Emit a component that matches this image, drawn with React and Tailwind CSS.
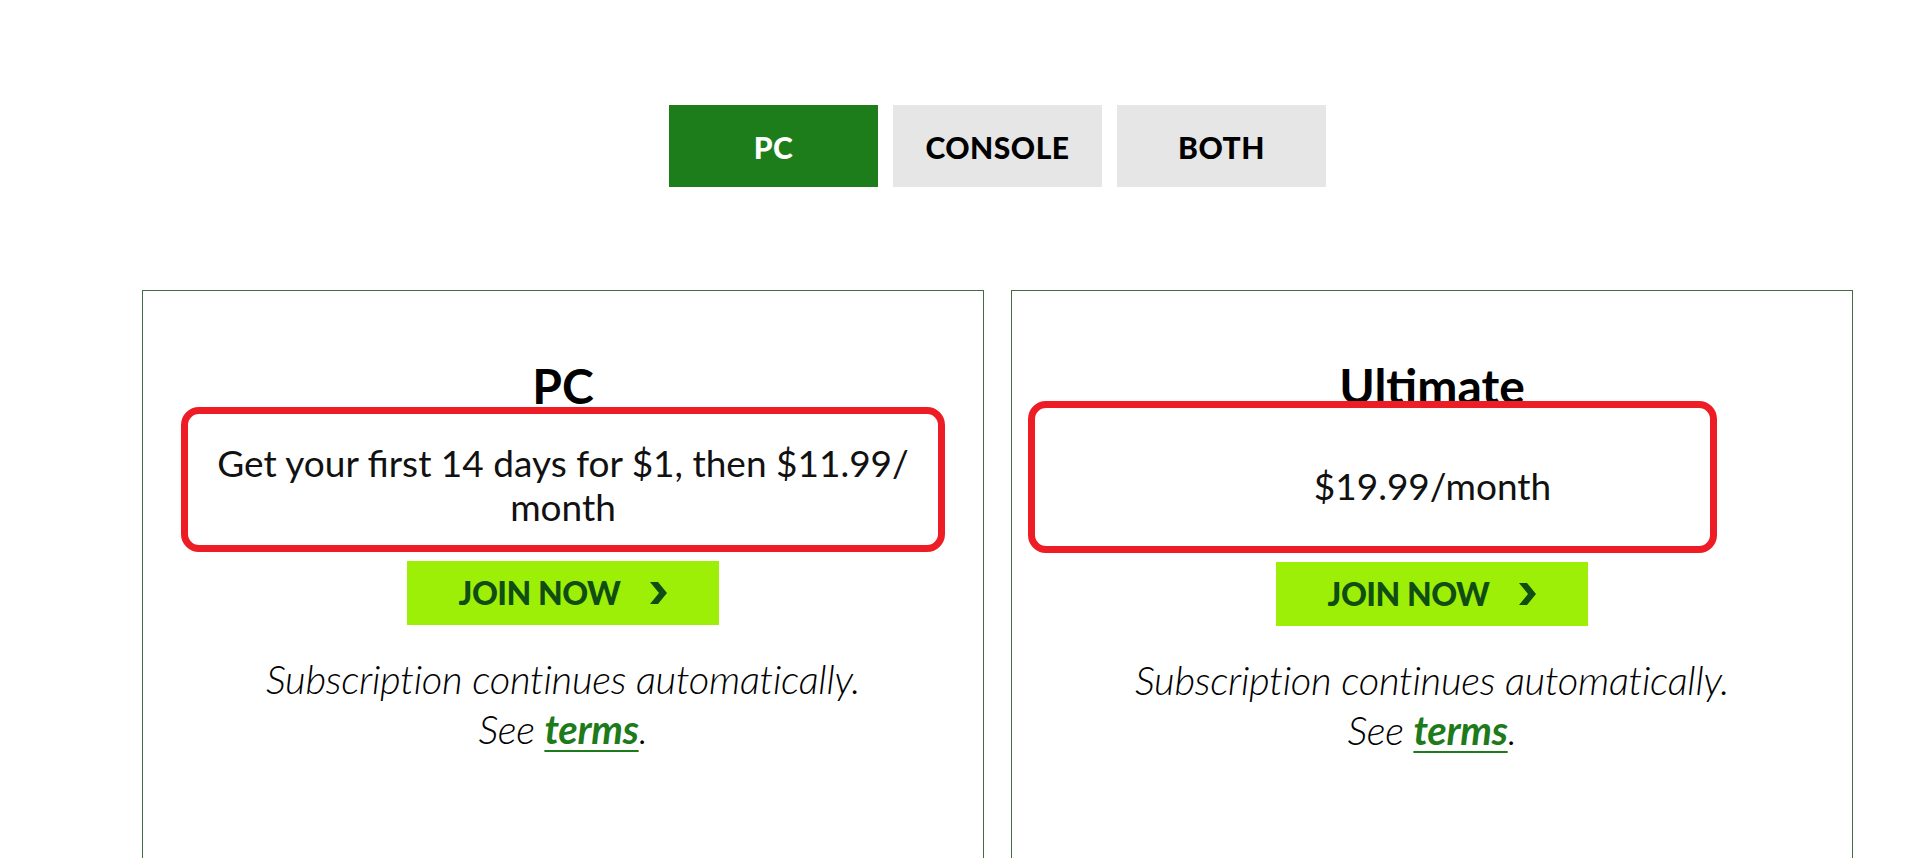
import React from "react";

const font = { fontFamily: '"Lato", "Open Sans", "Liberation Sans", sans-serif' };

function Chevron() {
  return (
    <svg width="17" height="22" viewBox="0 0 17 22" className="block">
      <polygon points="0,0 8,0 17,11 8,22 0,22 9,11" fill="#0f4d12" />
    </svg>
  );
}

function Tab({ label, active }) {
  return (
    <button
      className={
        active
          ? "w-[209px] h-[82px] bg-[#1d7d1b] text-white text-[30px] font-black tracking-[0.5px] pt-[3px]"
          : "w-[209px] h-[82px] bg-[#e6e6e6] text-black text-[30px] font-black tracking-[0.5px] pt-[3px]"
      }
    >
      {label}
    </button>
  );
}

function JoinButton() {
  return (
    <button className="relative z-10 mt-[9px] w-[312px] h-[64px] bg-[#9def08] flex items-center justify-center gap-[30px]">
      <span className="text-[32px] font-black text-[#0f4d12] tracking-[-0.5px]">JOIN NOW</span>
      <Chevron />
    </button>
  );
}

function Terms() {
  return (
    <div className="mt-[29px] text-center italic font-light text-[40px] leading-[50px] tracking-[-0.3px] text-black">
      <p>Subscription continues automatically.</p>
      <p>
        See{" "}
        <a href="#" className="font-bold text-[#1e7b1b] underline underline-offset-[6px] decoration-[2px]">
          terms
        </a>
        .
      </p>
    </div>
  );
}

function PlanCard({ title, children }) {
  return (
    <div className="h-[620px] border border-[#456b45] flex flex-col items-center pt-[66px]">
      <h2 className="text-[48px] leading-[58px] font-bold text-black">{title}</h2>
      {children}
    </div>
  );
}

export default function App() {
  return (
    <div className="min-h-screen bg-white overflow-hidden" style={font}>
      <div className="ml-[142px] w-[1711px] pt-[105px]">
        <div className="flex justify-center gap-[15px]">
          <Tab label="PC" active />
          <Tab label="CONSOLE" />
          <Tab label="BOTH" />
        </div>

        <div className="mt-[103px] grid grid-cols-2 gap-[27px]">
          <PlanCard title="PC">
            <div className="relative z-10 -mt-[8px] w-[764px] h-[145px] bg-white border-[7px] border-[#ee1c25] rounded-[18px] flex items-center justify-center pt-[10px] text-center text-[37px] leading-[44px] text-[#111]">
              <p>
                Get your first 14 days for $1, then $11.99/
                <br />
                month
              </p>
            </div>
            <JoinButton />
            <Terms />
          </PlanCard>

          <PlanCard title="Ultimate">
            <div className="relative z-10 -mt-[14px] self-start ml-[16px] w-[689px] h-[152px] bg-white border-[7px] border-[#ee1c25] rounded-[18px] flex items-center justify-center pl-[120px] pt-[17px] text-[37px] leading-[44px] text-[#111]">
              <p>$19.99/month</p>
            </div>
            <JoinButton />
            <Terms />
          </PlanCard>
        </div>
      </div>
    </div>
  );
}
